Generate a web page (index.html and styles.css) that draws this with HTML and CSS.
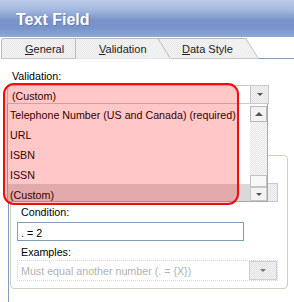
FILE: index.html
```html
<!doctype html>
<html>
<head>
<meta charset="utf-8">
<link rel="stylesheet" href="styles.css">
<title>Text Field</title>
</head>
<body>
<div class="window">
  <div class="titlebar">Text Field</div>

  <div class="tabs">
    <div class="tab tab-general"><u>G</u>eneral</div>
    <div class="tab tab-validation"><u>V</u>alidation</div>
    <div class="tab tab-style"><u>D</u>ata Style</div>
    <div class="tabs-rest"></div>
  </div>

  <div class="panel">
    <div class="label label-top">Validation:</div>
    <div class="select select-top">
      <span class="select-text">(Custom)</span>
      <span class="select-btn"><i class="arrow-down"></i></span>
    </div>

    <div class="group-wrap">
      <div class="group">
        <!-- rule box, hidden behind the open list -->
        <div class="select select-rule">
          <span class="select-text"></span>
          <span class="select-btn wide"><i class="arrow-down"></i></span>
        </div>
        <div class="label">Condition:</div>
        <div class="input">. = 2</div>
        <div class="label label-examples">Examples:</div>
        <div class="select select-examples">
          <span class="select-text">Must equal another number (. = {X})</span>
          <span class="select-btn wide"><i class="arrow-down"></i></span>
        </div>
      </div>
    </div>

    <!-- open list of the Validation box -->
    <div class="dropdown">
      <div class="item">Telephone Number (US and Canada) (required)</div>
      <div class="item">URL</div>
      <div class="item">ISBN</div>
      <div class="item">ISSN</div>
      <div class="item selected">(Custom)</div>
      <div class="scrollbar">
        <div class="sb-btn"><i class="arrow-up"></i></div>
        <div class="sb-track"></div>
        <div class="sb-thumb"></div>
        <div class="sb-btn sb-down"><i class="arrow-down"></i></div>
      </div>
    </div>

    <div class="highlight"></div>
  </div>
</div>
</body>
</html>
```

FILE: styles.css
```css
body {
    margin: 0;
    font-family: "Liberation Sans", Arial, sans-serif;
    font-size: 10.7px;
    line-height: 13px;
    color: #000;
    background: #fff;
}
.window {
    width: 294px;
    height: 302px;
    overflow: hidden;
}

/* title */
.titlebar {
    height: 37px;
    box-sizing: border-box;
    padding: 11px 0 0 16px;
    font-size: 16px;
    line-height: 18px;
    font-weight: bold;
    color: #fff;
    text-shadow: 1px 1px 0 rgba(50, 70, 120, 0.35);
    background: linear-gradient(#bccbe7, #a6bae0 25%, #7893ca 55%, #7794cb 75%, #8ea8d8);
}

/* tabs */
.tabs {
    display: flex;
    align-items: flex-end;
    height: 22px;
    padding-left: 1px;
}
.tab {
    position: relative;
    box-sizing: border-box;
    height: 21px;
    padding-top: 4px;
    border: 1px solid #bdbdbd;
    border-bottom-color: #c6c6c6;
    background: repeating-conic-gradient(#e6e6e6 0 25%, #f6f6f6 0 50%) 0 0 / 2px 2px;
    color: #222;
    font-size: 11px;
}
.tab-general {
    width: 75px;
    padding-left: 23px;
    border-radius: 3px 0 0 0;
    z-index: 1;
}
.tab-validation {
    width: 81px;
    padding-left: 23px;
    border-left: none;
    border-right: none;
    border-bottom-color: #e8e8e8;
    z-index: 3;
}
.tab-style {
    width: 95px;
    margin-left: -7px;
    padding-left: 32px;
    border-left: none;
    border-right: none;
    z-index: 2;
}
.tab-validation::after,
.tab-style::after {
    content: "";
    position: absolute;
    z-index: -1;
    top: -1px;
    right: -1px;
    width: 21px;
    height: 21px;
    box-sizing: border-box;
    border-top: 1px solid #bdbdbd;
    border-right: 1px solid #bdbdbd;
    border-bottom: 1px solid #c6c6c6;
    background: inherit;
    transform-origin: 0 0;
    transform: skewX(32deg);
}
.tab-validation::after {
    border-bottom-color: #e8e8e8;
}
.tabs-rest {
    flex: 1;
    height: 0;
    border-bottom: 1px solid #7f9db9;
}

/* panel */
.panel {
    position: relative;
    height: 243px;
    padding-top: 11px;
    box-sizing: border-box;
}
.label {
    padding-left: 4px;
}
.label-top {
    padding-left: 12px;
}
.select {
    display: flex;
    box-sizing: border-box;
    height: 19px;
    border: 1px solid #c9c9c9;
    background: #fff;
}
.select-text {
    flex: 1;
    padding: 4px 0 0 4px;
    white-space: nowrap;
    overflow: hidden;
}
.select-btn {
    display: flex;
    align-items: center;
    justify-content: center;
    width: 17px;
    border-left: 1px solid #c4c4c4;
    background: repeating-conic-gradient(#e2e2e2 0 25%, #f4f4f4 0 50%) 0 0 / 2px 2px;
}
.select-btn.wide {
    width: 26px;
}
.arrow-down {
    width: 0;
    height: 0;
    border-left: 3px solid transparent;
    border-right: 3px solid transparent;
    border-top: 3px solid #555;
}
.arrow-up {
    width: 0;
    height: 0;
    border-left: 4px solid transparent;
    border-right: 4px solid transparent;
    border-bottom: 4px solid #555;
}
.select-top {
    width: 262px;
    margin: 2px 0 0 7px;
}

/* lower group box */
.group-wrap {
    margin: 51px 0 0 8px;
    padding-left: 1px;
    height: 160px;
    border-left: 1px solid #7f9db9;
}
.group {
    box-sizing: border-box;
    width: 278px;
    padding: 27px 0 7px 6px;
    border: 1px solid #d0d0bf;
    border-radius: 4px;
}
.select-rule {
    width: 261px;
}
.group .label {
    margin-top: 4px;
}
.input {
    box-sizing: border-box;
    width: 227px;
    height: 19px;
    margin-top: 3px;
    padding: 4px 0 0 3px;
    border: 1px solid #7f9db9;
}
.group .label-examples {
    margin-top: 5px;
}
.select-examples {
    width: 261px;
    height: 21px;
    margin-top: 1px;
    border: 1px dotted #d6d6d6;
    color: #b2b2b2;
}
.select-examples .select-text {
    padding: 4px 0 0 3px;
}
.select-examples .select-btn {
    border: 1px solid #cfcfcf;
}
.select-examples .arrow-down {
    border-top-color: #777;
}

/* open drop-down list */
.dropdown {
    position: absolute;
    left: 7px;
    top: 45px;
    width: 261px;
    height: 98px;
    box-sizing: border-box;
    border: 1px solid #a8a8a8;
    border-top: none;
    background: #fff;
    overflow: hidden;
}
.item {
    height: 20px;
    box-sizing: border-box;
    padding: 5px 0 0 2px;
    white-space: nowrap;
}
.item.selected {
    background: #d9d9d9;
}
.scrollbar {
    position: absolute;
    top: 2px;
    right: 0;
    bottom: 0;
    width: 17px;
    display: flex;
    flex-direction: column;
    background: repeating-conic-gradient(#e6e6e6 0 25%, #f7f7f7 0 50%) 0 0 / 2px 2px;
}
.sb-btn {
    height: 16px;
    box-sizing: border-box;
    display: flex;
    align-items: center;
    justify-content: center;
    border: 1px solid #b8b8b8;
    background: #f3f3f3;
}
.sb-down {
    height: 14px;
    border-color: #c8c8c8;
}
.sb-track {
    flex: 1;
}
.sb-thumb {
    height: 12px;
    box-sizing: border-box;
    border: 1px solid #c2c2c2;
    background: #f8f8f8;
}

/* red call-out over the list */
.highlight {
    position: absolute;
    left: 3px;
    top: 24px;
    width: 236px;
    height: 122px;
    box-sizing: border-box;
    border: 2px solid #f20c0c;
    border-radius: 11px;
    background: rgba(255, 0, 0, 0.22);
}
```
